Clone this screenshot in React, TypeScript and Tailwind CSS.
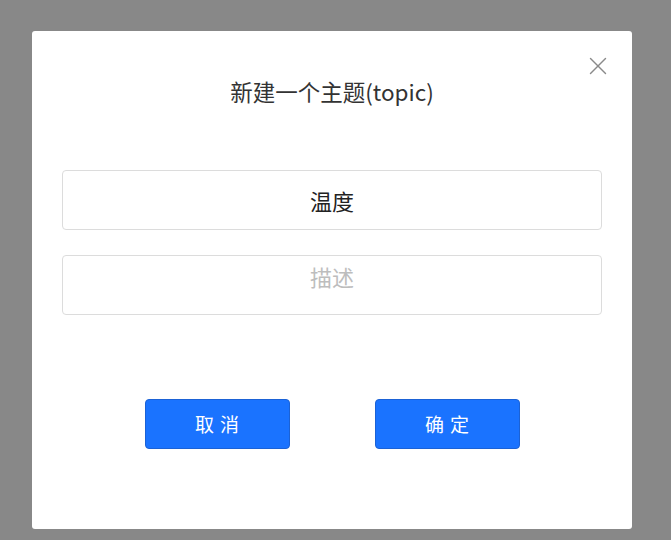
import { X } from 'lucide-react'

const font = { fontFamily: '"Microsoft YaHei", "Noto Sans CJK SC", "Noto Sans", sans-serif' }

export default function App() {
  return (
    <div className="flex h-[540px] w-full items-start justify-start bg-[#888888] pl-[32px] pt-[31px]" style={font}>
      <div className="relative flex h-[498px] w-[600px] flex-col rounded-[3px] bg-white px-[30px]">
        <button className="absolute right-[19px] top-[20px] text-[#8a8a8a]">
          <X className="h-[30px] w-[30px]" strokeWidth={1.1} />
        </button>
        <h2 className="mt-[43px] text-center text-[22.5px] leading-[34px] text-[#333333]">新建一个主题(topic)</h2>
        <div className="mt-[62px] flex flex-col gap-[25px]">
          <input
            defaultValue="温度"
            className="h-[60px] w-full rounded-[4px] border border-[#dcdcdc] text-center text-[22px] text-[#222222] outline-none"
            style={font}
          />
          <input
            placeholder="描述"
            className="h-[60px] w-full rounded-[4px] border border-[#dcdcdc] pb-[18px] text-center text-[22px] text-[#222222] outline-none placeholder:text-[#bdbdbd]"
            style={font}
          />
        </div>
        <div className="mt-[84px] flex justify-center gap-[85px]">
          <button className="h-[50px] w-[145px] rounded-[4px] border border-[#1b62d6] bg-[#1a73ff] pl-[6px] text-[19px] tracking-[6px] text-white">
            取消
          </button>
          <button className="h-[50px] w-[145px] rounded-[4px] border border-[#1b62d6] bg-[#1a73ff] pl-[6px] text-[19px] tracking-[6px] text-white">
            确定
          </button>
        </div>
      </div>
    </div>
  )
}
